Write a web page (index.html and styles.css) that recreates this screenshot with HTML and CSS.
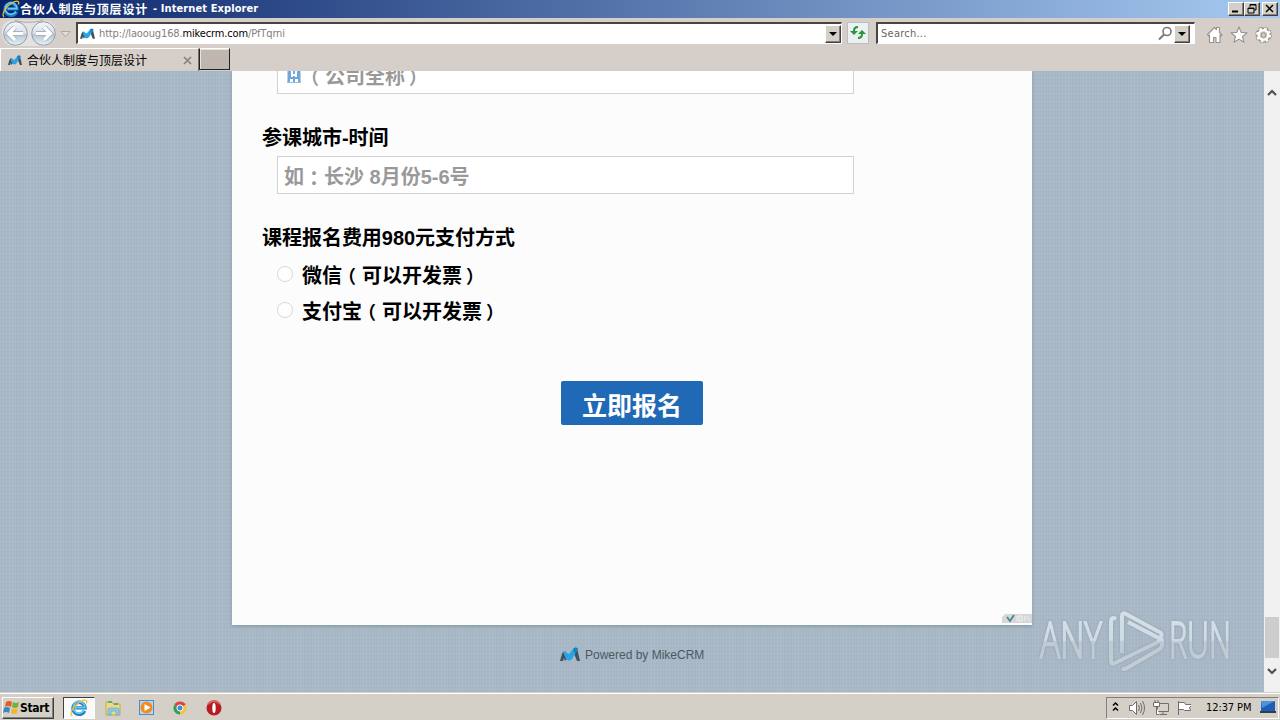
FILE: index.html
```html
<!DOCTYPE html>
<html lang="zh-CN">
<head>
<meta charset="utf-8">
<title>合伙人制度与顶层设计</title>
<link rel="stylesheet" href="styles.css">
</head>
<body>
<svg class="defs" width="0" height="0" aria-hidden="true">
  <symbol id="mike" viewBox="0 0 20 14">
    <path d="M0 14 2 7Q3 4 5 5L9 9 5 14 4 11 3 14ZM13 3 17 1 20 14H17L15 9Z" fill="#40505d"/>
    <path d="M3 5Q5 3 7 6L9 7 14 1Q16-1 18 2L12 12Q9 15 6 12Z" fill="#29a3e2"/>
    <path d="M13 2Q16-1 18 2L15 7Z" fill="#1681c4"/>
  </symbol>
  <symbol id="ie" viewBox="0 0 18 18">
    <path d="M14.500 11.800A6 6 0 1 1 15 8.900H5.500" fill="none" stroke="#187bc0" stroke-width="3.400"/>
    <path d="M14 11.500A5.800 5.800 0 1 1 14.800 8.700H5.500" fill="none" stroke="#62c9f3" stroke-width="1.700"/>
    <path d="M2 17C-1 14 4 6 10 3 15 0 18 1 16.300 4.500" fill="none" stroke="#efbd2f" stroke-width="1.300"/>
  </symbol>
</svg>
<div class="screen">
  <header class="titlebar">
    <svg class="title-ie" width="18" height="18"><use href="#ie"/></svg>
    <span class="title-cn">合伙人制度与顶层设计</span><span class="title-en">- Internet Explorer</span>
    <div class="winbtns">
      <span class="bevel wb"><svg width="14" height="11"><path d="M3 8.500h6" stroke="#000" stroke-width="2"/></svg></span>
      <span class="bevel wb"><svg width="14" height="11"><path d="M5 4V1.500h6V7H9M5 2h6M3 5h6v5H3zM3 5.500h6" fill="none" stroke="#000"/></svg></span>
      <span class="bevel wb last"><svg width="14" height="11"><path d="m3 2 7 7m0-7-7 7" stroke="#000" stroke-width="1.500"/></svg></span>
    </div>
  </header>
  <div class="toolbar">
    <svg class="nav" width="76" height="30" viewBox="0 0 76 30">
      <defs><linearGradient id="orb" x2="0" y2="1"><stop stop-color="#f4f6f9"/><stop offset=".48" stop-color="#d9e0e8"/><stop offset=".55" stop-color="#b9c5d2"/><stop offset="1" stop-color="#e6f2f6"/></linearGradient></defs>
      <path d="M15 2H43Q51 2 55 9V21Q50 28 43 28H15Q3 28 2 15T15 2" fill="#e4e3e2"/>
      <path d="M15 2.500Q29 6 43 2.500" fill="none" stroke="#a6a6aa"/>
      <circle cx="15.500" cy="15.500" r="11.800" fill="url(#orb)" stroke="#929eaa"/>
      <circle cx="43.500" cy="15.500" r="11.800" fill="url(#orb)" stroke="#929eaa"/>
      <path d="M23 15.500H9m6-6.500-6.500 6.500L15 22M36 15.500h14m-6-6.500 6.500 6.500L44 22" fill="none" stroke="#a4b3c3" stroke-width="5"/>
      <path d="M23 15.500H9m6-6.500-6.500 6.500L15 22M36 15.500h14m-6-6.500 6.500 6.500L44 22" fill="none" stroke="#fff" stroke-width="3.200"/>
      <path d="M61 13.500h9l-4.500 5z" fill="#e2dfdc" stroke="#aaa8a4"/>
    </svg>
    <div class="field address">
      <svg class="fav" width="15" height="11"><use href="#mike"/></svg>
      <span class="url">http://laooug168.<b>mikecrm.com</b>/PfTqrni</span>
      <span class="bevel drop"><svg width="10" height="6"><path d="M1 1h8L5 5z"/></svg></span>
    </div>
    <div class="refresh"><svg width="16" height="16" viewBox="0 0 16 16"><path d="M8 2Q4 2 4 6v2M8 13q4 0 4-4V8" fill="none" stroke="#299438" stroke-width="2"/><path d="M0 6h8L4 10zM8 9h8l-4-4z" fill="#299438"/></svg></div>
    <div class="field search">
      <span class="searchtext">Search...</span>
      <svg class="mag" width="15" height="15" viewBox="0 0 15 15"><circle cx="9" cy="5.500" r="4" fill="none" stroke="#787878" stroke-width="1.600"/><path d="m6 8.500-5 5" stroke="#787878" stroke-width="2"/></svg>
      <span class="bevel drop"><svg width="10" height="6"><path d="M1 1h8L5 5z"/></svg></span>
    </div>
    <svg class="cmds" width="68" height="20" viewBox="0 0 68 20">
      <g fill="#fff" stroke="#96918d" stroke-width="1.100" stroke-linejoin="round">
      <path d="m1.500 9.500 7-7 2 2v-2h3v5l2.500 2.500-1 1-1-1v7.500h-4v-5H7.500v5H3.500V10l-1 1z"/>
      <path d="m33 2 2.200 5.400 5.800.4-4.500 3.700 1.500 5.800-5-3.200-5 3.200 1.500-5.800L25 7.800l5.800-.4z"/>
      </g>
      <circle cx="57.500" cy="10" r="6" fill="none" stroke="#96918d" stroke-width="4.500" stroke-dasharray="3 1.710"/>
      <circle cx="57.500" cy="10" r="5.500" fill="none" stroke="#96918d" stroke-width="4"/>
      <circle cx="57.500" cy="10" r="6" fill="none" stroke="#fff" stroke-width="3" stroke-dasharray="2.300 2.410"/>
      <circle cx="57.500" cy="10" r="4.800" fill="none" stroke="#fff" stroke-width="2.500"/>
      <circle cx="57.500" cy="10" r="2.300" fill="none" stroke="#96918d"/>
    </svg>
  </div>
  <nav class="tabs">
    <div class="tab"><svg class="fav" width="14" height="10"><use href="#mike"/></svg><span>合伙人制度与顶层设计</span><svg class="tabx" width="9" height="9"><path d="m1 1 7 7m0-7-7 7" stroke="#888480" stroke-width="1.700"/></svg></div>
    <div class="newtab"></div>
  </nav>
  <main class="page">
    <div class="web">
      <section class="form">
        <div class="input company">
          <svg width="14" height="14"><path d="M1 0h12v13H1zM0 13h14" fill="#70a7d8" stroke="#70a7d8"/><path d="M4 2h2v3h2V2h2v6H8V7H6v1H4zM3 10h3v3H3zm5 0h3v3H8z" fill="#fff"/></svg>
          <span><i>（</i>公司全称<i>）</i></span>
        </div>
        <h2 class="q city">参课城市-时间</h2>
        <div class="input place">如<em lang="zh-TW">：</em>长沙 8月份5-6号</div>
        <h2 class="q pay">课程报名费用980元支付方式</h2>
        <div class="option"><span class="radio"></span><span>微信<i>（</i>可以开发票<i>）</i></span></div>
        <div class="option"><span class="radio"></span><span>支付宝<i>（</i>可以开发票<i>）</i></span></div>
        <div class="submit">立即报名</div>
        <svg class="badge" width="30" height="9"><path d="M3 0h27v9H0V3z" fill="#d5d7d8"/><path d="m5 3 3 4 4-6" fill="none" stroke="#4c8592" stroke-width="1.800"/><path d="M15 2v5M17 2h3v5h-3zM23 2v5M25 2l3 5" fill="none" stroke="#f0f0f0"/></svg>
      </section>
      <footer class="powered"><svg width="20" height="14"><use href="#mike"/></svg><span>Powered by MikeCRM</span></footer>
      <svg class="watermark" width="200" height="66" viewBox="0 0 200 66">
        <defs><linearGradient id="wm" x2="0" y2="66" gradientUnits="userSpaceOnUse"><stop offset=".1" stop-color="#dce6ee"/><stop offset=".49" stop-color="#d5e0e9"/><stop offset=".51" stop-color="#c2cdd6"/><stop offset="1" stop-color="#c8d1d9"/></linearGradient></defs>
        <g fill="url(#wm)" stroke="url(#wm)" stroke-width="2"><text x="4" y="50" textLength="62" lengthAdjust="spacingAndGlyphs">ANY</text><text x="133" y="50" textLength="62" lengthAdjust="spacingAndGlyphs">RUN</text></g>
        <path d="M80 11Q75 8 75 14V53Q75 57 79 55L126 32M86 45V8Q86 4 90 6L125 25Q127 28 123 30L92 14M86 60Q88 62 91 60L124 41Q127 38 126 32L92 14" fill="none" stroke="url(#wm)" stroke-width="4"/>
      </svg>
    </div>
    <aside class="scroll">
      <svg class="up" width="10" height="8"><path d="m1 6 4-4 4 4" fill="none" stroke="#505050" stroke-width="2.200"/></svg>
      <div class="thumb"></div>
      <svg class="down" width="10" height="8"><path d="m1 2 4 4 4-4" fill="none" stroke="#505050" stroke-width="2.200"/></svg>
    </aside>
  </main>
  <footer class="taskbar">
    <div class="bevel start"><svg width="17" height="16" viewBox="0 0 17 16"><path d="M3 2q3-2 6 0L8 7Q5 5 2 7z" fill="#e95b24"/><path d="M10 2q3 2 6 0l-1 5q-3 2-6 0z" fill="#76af39"/><path d="M1 8q3-2 6 0l-1 5q-3-2-6 0z" fill="#3689c9"/><path d="M9 8q3 2 6 0l-1 5q-3 2-6 0z" fill="#f3b72d"/></svg><b>Start</b></div>
    <div class="active"><svg width="18" height="18"><use href="#ie"/></svg></div>
    <svg class="apps" width="120" height="20" viewBox="0 0 120 20">
      <path d="M2 4h6l1 2h7v11H2z" fill="#edda84" stroke="#c8aa50"/><path d="M4 4h4m2 2h4" stroke="#5eaf61" stroke-width="2"/><path d="M4 17v-5q0-2 2-2h7q2 0 2 2v5h-3v-4H7v4z" fill="#8bcbe8" stroke="#65a9c9" stroke-width=".700"/>
      <rect x="35.500" y="2.500" width="14" height="14" fill="#b5d9f2" stroke="#4b8dcc"/><circle cx="42.500" cy="9.500" r="6" fill="#f38c20"/><path d="m40.500 6 6 3.500-6 3.500z" fill="#fff"/>
      <path d="M76 10 70.400 6.700A6.500 6.500 0 0 1 81.600 6.700z" fill="#dc4437"/><path d="M76 10 81.600 6.700A6.500 6.500 0 0 1 76 16.500z" fill="#f4c433"/><path d="M76 10v6.500A6.500 6.500 0 0 1 70.400 6.700z" fill="#2e9e58"/><circle cx="76" cy="10" r="3.100" fill="#4a87dc" stroke="#fff"/>
      <circle cx="110" cy="10" r="7.500" fill="#b51e23"/><path d="M104 6q6-6 12 0" fill="none" stroke="#dc6263" stroke-width="2"/><ellipse cx="110" cy="10" rx="1.700" ry="5" fill="#fff"/>
    </svg>
    <div class="tray">
      <svg width="84" height="18" viewBox="0 0 84 18">
        <path d="m6 6.500 2.500-2.500L11 6.500m-5 5L8.500 9l2.500 2.500" fill="none" stroke="#000" stroke-width="1.500"/>
        <g fill="#fff" stroke="#706e6b"><path d="M22.500 6.500h3l4-4v13l-4-4h-3z"/><path d="M31.500 6q2 3 0 6m2-8q3 5 0 10m2-12q4 7 0 14" fill="none"/><path d="M50.500 4.500h11v8h-11zM53 15.500h7M56 12.500v3" fill="#d5d1cc"/><path d="M46.500 3.500h6v4h-6zM48 1v2m3-2v2M49.500 8v7.500h3"/><path d="M71.500 2v14M71.500 3.500h6l1 2h7l-3 3 1 3h-6l-1-1h-5z"/></g>
      </svg>
      <span class="clock">12:37 PM</span>
      <svg class="desk" width="16" height="13"><path d="M1 0h14v10H1z" fill="#1c5fb7"/><path d="M1 0h14L2 7z" fill="#4e91dc"/><path d="M0 11h16" stroke="#333e4b" stroke-width="2"/></svg>
    </div>
  </footer>
</div>
</body>
</html>
```
FILE: styles.css
```css
* { box-sizing: border-box; }
body { margin: 0; overflow: hidden; }
svg { display: block; flex: none; }
.defs { position: absolute; }
i, em { font-style: normal; }
.screen { width: 1280px; height: 720px; display: flex; flex-direction: column; background: #d4d0c8; font: 11px/14px "DejaVu Sans Condensed", "DejaVu Sans", "Noto Sans CJK SC", sans-serif; color: #000; white-space: nowrap; }
.bevel { background: #d4d0c8; border: 1px solid; border-color: #fff #404040 #404040 #fff; box-shadow: inset -1px -1px #808080; }
.titlebar { height: 18px; flex: none; display: flex; align-items: center; padding: 0 2px; background: linear-gradient(90deg, #0a246a, #a6caf0); color: #fff; font-weight: bold; }
.title-cn { font: bold 12px/18px "Noto Sans CJK SC", sans-serif; letter-spacing: .8px; width: 133px; }
.title-en { letter-spacing: .1px; }
.winbtns { margin-left: auto; display: flex; }
.wb { width: 16px; height: 14px; display: flex; }
.wb.last { margin-left: 2px; }
.toolbar { height: 30px; flex: none; display: flex; align-items: center; background: #d6cfc9; }
.field { height: 22px; background: #fff; border: 1px solid #fff; border-top: 2px solid #484540; border-left: 2px solid #484540; display: flex; align-items: center; }
.address { width: 766px; padding-left: 1px; }
.address .fav { margin-left: 1px; }
.url { margin-left: 4px; color: #808080; letter-spacing: -.14px; }
.url b { font-weight: normal; color: #000; }
.drop { width: 16px; height: 18px; margin-left: auto; display: grid; place-items: center; }
.refresh { width: 22px; height: 22px; margin: 0 7px 0 5px; border: 1px solid #b9bec1; background: #edf0f0; display: grid; place-items: center; }
.search { width: 319px; padding: 0 4px 0 3px; }
.searchtext { color: #666; letter-spacing: .25px; }
.mag { margin-left: auto; }
.search .drop { margin-left: 1px; }
.cmds { margin: 3px 0 0 11px; }
.tabs { height: 23px; flex: none; display: flex; background: #d6cfc9; }
.tab { width: 199px; border-top: 1px solid #fff; border-left: 1px solid #fff; border-right: 1px solid #77736e; display: flex; align-items: center; padding-left: 7px; font: 12px/18px "Noto Sans CJK SC", sans-serif; }
.tab span { margin-left: 5px; }
.tabx { margin-left: 36px; }
.newtab { width: 31px; height: 22px; background: #beb6af; border: 1px solid #222; border-top-color: #fff; box-shadow: inset 1px 1px #e7e3de; }
.page { height: 621px; flex: none; display: flex; overflow: hidden; }
.web { width: 1264px; position: relative; background-color: #a8b8c6; background-image: repeating-linear-gradient(90deg, rgba(255,255,255,.05) 0 1px, transparent 1px 3px), repeating-linear-gradient(0deg, rgba(80,100,115,.035) 0 1px, transparent 1px 4px), repeating-linear-gradient(90deg, rgba(80,100,120,.012) 0 8px, transparent 8px 16px); }
.form { width: 800px; height: 554px; margin-left: 232px; padding-left: 30px; position: relative; background: #fcfcfc; box-shadow: 0 1px 3px rgba(70,90,105,.4); font: bold 20px/30px "Liberation Sans", "Noto Sans CJK SC", sans-serif; display: flow-root; }
.input { width: 577px; height: 38px; margin-left: 15px; border: 1px solid #d2d2d2; background: #fff; color: #999; line-height: 37px; padding-left: 6px; }
.company { margin-top: -15px; display: flex; padding-left: 9px; line-height: 41px; }
.company svg { margin-top: 12px; }
.company span { margin-left: 4px; }
.form i { display: inline-block; width: 20px; font-size: 18px; line-height: 20px; text-indent: -4px; }
.form i:last-child { text-indent: 4px; }
.form em { font-family: "Noto Sans CJK TC", sans-serif; vertical-align: -2px; line-height: 20px; }
.q { margin: 0; font: inherit; height: 30px; letter-spacing: -.03px; }
.city { margin-top: 29px; }
.place { margin-top: 3px; line-height: 40px; }
.pay { margin-top: 29px; }
.option { display: flex; height: 36px; margin-left: 15px; align-items: center; }
.pay + .option { margin-top: 4px; }
.option > span:last-child { padding-top: 2px; }
.radio { width: 16px; height: 16px; margin: 0 9px 2px 0; border: 1px solid #d7d7d7; border-radius: 50%; background: #fff; }
.submit { width: 142px; height: 44px; margin: 52px 0 0 299px; background: #1f69b6; border-radius: 2px; color: #fff; font-size: 25px; line-height: 51px; text-align: center; }
.badge { position: absolute; right: 0; bottom: 2px; }
.powered { display: flex; align-items: center; gap: 5px; margin: 21px 0 0 560px; height: 18px; font: 12px/18px "Liberation Sans", Arial, sans-serif; color: #4c5964; }
.powered svg { margin-bottom: 2px; }
.watermark { position: absolute; left: 1036px; top: 537px; filter: drop-shadow(0 0 1px #8998a5); font: 49px "Open Sans", sans-serif; font-weight: 300; opacity: .88; }
.scroll { width: 16px; height: 621px; background: #f0f0f0; display: flex; flex-direction: column; align-items: center; }
.up { margin-top: 18px; }
.thumb { width: 14px; height: 41px; margin-top: 520px; background: #cdcdcd; }
.down { margin-top: 9px; }
.taskbar { height: 28px; flex: none; border-top: 1px solid #d4d0c8; box-shadow: inset 0 1px #fff; display: flex; align-items: center; padding: 3px 0 1px 2px; }
.start { width: 52px; height: 22px; display: flex; align-items: center; font-size: 12px; letter-spacing: -.35px; }
.active { width: 32px; height: 22px; margin-left: 9px; border: 1px solid #404040; border-right-color: #fff; border-bottom-color: #fff; background: #fafafa; display: grid; place-items: center; }
.apps { margin-left: 9px; }
.tray { width: 173px; height: 22px; margin-left: auto; margin-right: 1px; border: 1px solid #808080; border-right-color: #fff; border-bottom-color: #fff; display: flex; align-items: center; }
.clock { margin-left: 15px; width: 48px; letter-spacing: -.1px; }
.desk { margin-left: 6px; }
```
